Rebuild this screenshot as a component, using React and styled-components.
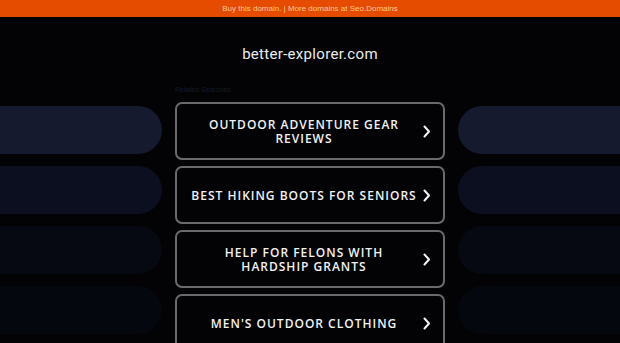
import React from 'react'
import styled, { createGlobalStyle } from 'styled-components'

const GlobalStyle = createGlobalStyle`
  html, body {
    margin: 0;
    padding: 0;
    background: #030305;
  }
  body {
    font-family: "Liberation Sans", Arial, sans-serif;
    overflow: hidden;
  }
`

const Page = styled.div`
  width: 620px;
  height: 343px;
  overflow: hidden;
  background: #030305;
`

const TopBar = styled.div`
  height: 17px;
  background: #e64c00;
  color: #ffc79c;
  font-size: 8px;
  line-height: 17px;
  text-align: center;
`

const Title = styled.h1`
  margin: 0;
  padding: 28px 0 0;
  height: 57px;
  box-sizing: border-box;
  font-family: Roboto, "Liberation Sans", sans-serif;
  font-weight: 400;
  font-size: 15px;
  letter-spacing: 0.3px;
  color: #ececec;
  text-align: center;
`

const Body = styled.div`
  display: grid;
  grid-template-columns: 1fr 270px 1fr;
  column-gap: 13px;
`

const PillColumn = styled.div`
  display: flex;
  flex-direction: column;
  gap: 12px;
  padding-top: 32px;
`

const Pill = styled.div`
  height: 48px;
  background: ${p => p.$color};
  border-radius: ${p => (p.$side === 'left' ? '0 24px 24px 0' : '24px 0 0 24px')};
`

const Center = styled.div`
  display: flex;
  flex-direction: column;
`

const Related = styled.div`
  height: 28px;
  box-sizing: border-box;
  padding-top: 8px;
  font-size: 7px;
  line-height: 16px;
  color: #161a2c;
`

const LinkList = styled.div`
  display: flex;
  flex-direction: column;
  gap: 6px;
`

const LinkButton = styled.a`
  display: flex;
  align-items: center;
  gap: 4px;
  height: 58px;
  box-sizing: border-box;
  padding: 0 11px 0 13px;
  border: 2px solid #6a6a6c;
  border-radius: 7px;
  color: #f2f2f2;
  text-decoration: none;
`

const LinkText = styled.span`
  flex: 0 0 228px;
  padding-top: 2px;
  text-align: center;
  font-family: "Open Sans", "Noto Sans", sans-serif;
  font-weight: 600;
  font-size: 12px;
  line-height: 14px;
  letter-spacing: 1px;
  text-transform: uppercase;
`

const Chevron = () => (
  <svg width="10" height="14" viewBox="0 0 10 14" fill="none">
    <path d="M2.5 2.5 L7 7.5 L2.5 12.5" stroke="#f2f2f2" strokeWidth="2" strokeLinecap="round" strokeLinejoin="round" />
  </svg>
)

const pillColors = ['#151a2e', '#0c0f1f', '#070912', '#05070f']
const links = [
  'Outdoor Adventure Gear Reviews',
  'Best Hiking Boots for Seniors',
  'Help for Felons with Hardship Grants',
  "Men's Outdoor Clothing"
]

export default function App () {
  return <Page>
    <GlobalStyle />
    <TopBar>Buy this domain. | More domains at Seo.Domains</TopBar>
    <Title>better-explorer.com</Title>
    <Body>
      <PillColumn>
        {pillColors.map(c => <Pill key={c} $color={c} $side="left" />)}
      </PillColumn>
      <Center>
        <Related>Related Searches</Related>
        <LinkList>
          {links.map(text => (
            <LinkButton key={text} href="#">
              <LinkText>{text}</LinkText>
              <Chevron />
            </LinkButton>
          ))}
        </LinkList>
      </Center>
      <PillColumn>
        {pillColors.map(c => <Pill key={c} $color={c} $side="right" />)}
      </PillColumn>
    </Body>
  </Page>
}
